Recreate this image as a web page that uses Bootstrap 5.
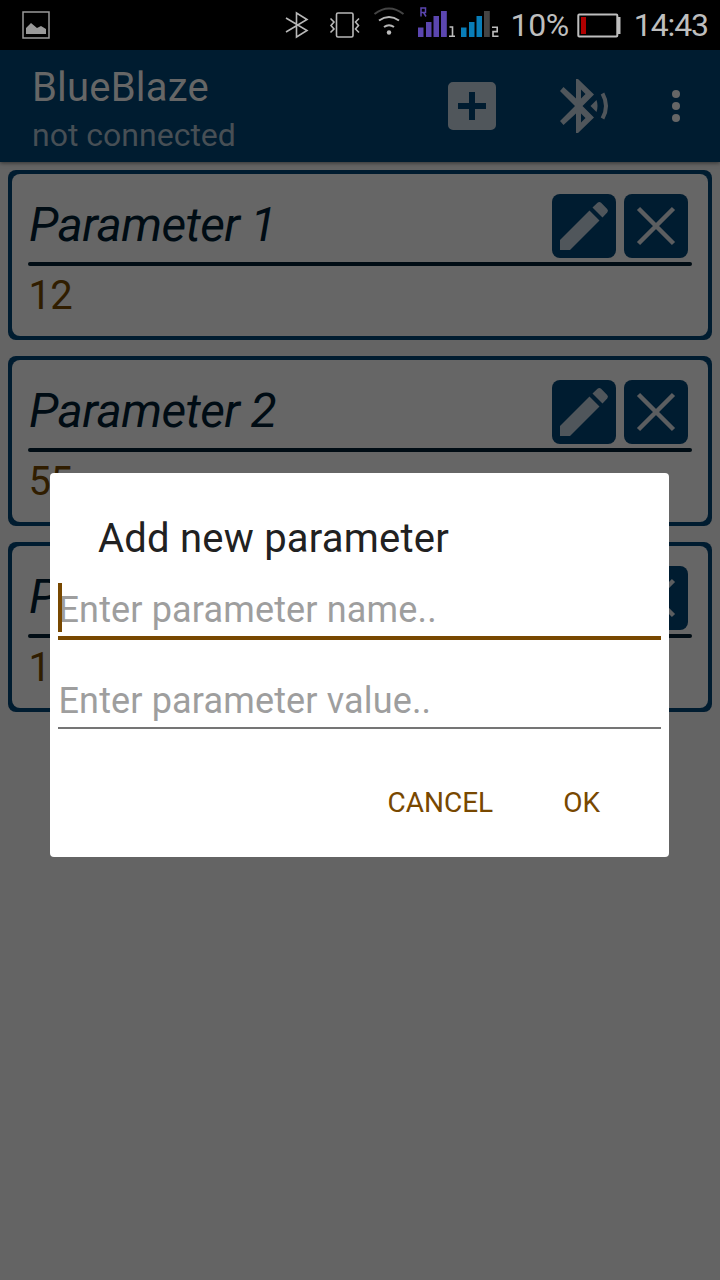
<!DOCTYPE html>
<html lang="en">
<head>
<meta charset="utf-8">
<meta name="viewport" content="width=device-width, initial-scale=1">
<title>BlueBlaze</title>
<link href="https://cdn.jsdelivr.net/npm/bootstrap@5.3.0/dist/css/bootstrap.min.css" rel="stylesheet">
<style>
body{font-family:Roboto,"Noto Sans",sans-serif;background:#646464;height:1280px;overflow:hidden}
svg{display:block;flex:none}
.statusbar{height:50px;background:#000;color:#bebebe;font-size:32px;line-height:38px;padding:6px 12px 6px 22px}
.signals{margin-right:5px}
.battery{margin-left:8px;margin-right:13px}
.status-pct{letter-spacing:-.4px}
.status-time{letter-spacing:-1.1px}
.appbar{height:112px;background:#001c30;padding:14px 24px 0 32px;box-shadow:0 1px 4px rgba(0,0,0,.5)}
.appbar-icons{margin-top:10px;margin-right:16px}
.app-title{font-size:40px;line-height:48px;color:#666;margin-bottom:4px;letter-spacing:.2px}
.app-sub{font-size:32px;line-height:38px;color:#474f55}
.params{padding:8px;gap:16px}
.param{height:170px;background:#001c30;border-radius:8px;padding:4px}
.param-in{background:#666;border-radius:8px;height:162px;padding:20px 16px 0}
.param-name{font-size:48px;line-height:56px;font-style:italic;color:#000c14;margin-top:3px;letter-spacing:-.6px;padding-left:1px}
.param-rule{height:4px;border-radius:2px;background:#000c14;margin-top:4px}
.param-value{font-size:40px;line-height:48px;color:#301d00;margin-top:6px;padding-left:.5px;letter-spacing:-.7px}
.param-btn{width:64px;height:64px;border-radius:8px;background:#001c30;padding:0;border:0}
.dialog-box{top:473px;left:50px;width:619px;height:384px;background:#fff;border:0;border-radius:4px;padding:42px 8px 0}
.dialog-title{font-size:40px;line-height:48px;color:#212121;padding-left:40px;letter-spacing:.22px}
.field{font-size:36px;line-height:42px;color:#9e9e9e;letter-spacing:.15px;padding-left:.5px}
.field-name{height:77px;padding-top:26px;border-bottom:4px solid #784800}
.field-value{height:89px;padding-top:40px;border-bottom:2px solid #757575}
.caret{left:0;top:20px;width:4px;height:49px;background:#784800}
.dialog-actions{margin-top:58px;padding-right:61px;gap:70px}
.dialog-btn{font-size:28px;line-height:32px;color:#784800;border:0;background:none;padding:0}
</style>
</head>
<body>
<header class="statusbar d-flex align-items-center justify-content-between">
  <svg width="28" height="28" viewBox="0 0 28 28"><path d="M1 1h26v26H1z" fill="none" stroke="#999" stroke-width="1.5"/><path d="M4 23v-6l5-5 6 5 4-2 5 3v5z" fill="#999"/></svg>
  <div class="d-flex align-items-center">
    <svg class="signals" width="226" height="50" viewBox="280 0 226 50">
      <g fill="none" stroke="#b8b8b8" stroke-width="1.6">
        <path d="M286 18 307 30.500 296.500 37V13L307 19.500 286 32"/>
        <rect x="336.500" y="13" width="16.500" height="24" rx="1.500"/>
        <path d="M330.500 18.500 334 22 331 25.500 334 29 330.500 32.500M359 18.500 355.500 22 358.500 25.500 355.500 29 359 32.500"/>
        <path d="M374.500 14q14.500-11 29 0" stroke="#444" stroke-width="2"/>
        <path d="M379 20.500q10-7 20 0M384 27q5-3.500 10 0" stroke-width="2"/>
      </g>
      <circle cx="389" cy="32.500" r="2.200" fill="#bebebe"/>
      <path d="M418 27.500h5.500V37H418zM426 22h5.500v15H426zM433.500 16h5.500v21h-5.500zM441 11h5.800v26H441z" fill="#5b46b0"/>
      <path d="M461 27.500h5.500V37H461zM469 22h5.500v15H469zM476.500 16h5.500v21h-5.500z" fill="#087db8"/>
      <path d="M484 11h5.800v26H484z" fill="#444"/>
      <path d="M421 16.500V8h4.500v4.500H421M423.500 12.500l2.500 4" fill="none" stroke="#5b46b0" stroke-width="1.500"/>
      <path d="M449.500 27h3v9M449 36.200h6M492 27.200h5.200v4.400H493v4.600h5.500" fill="none" stroke="#bebebe" stroke-width="1.600"/>
    </svg>
    <span class="status-pct">10%</span>
    <svg class="battery" width="44" height="26" viewBox="0 0 44 26"><rect x="1.300" y="2.500" width="39" height="22" rx="1" fill="none" stroke="#bebebe" stroke-width="2"/><path d="M40 5h3.500v17H40z" fill="#bebebe"/><path d="M4 5h5v17H4z" fill="#b00000"/></svg>
    <span class="status-time">14:43</span>
  </div>
</header>

<nav class="appbar d-flex justify-content-between position-relative">
  <div>
    <div class="app-title">BlueBlaze</div>
    <div class="app-sub">not connected</div>
  </div>
  <svg class="appbar-icons" width="240" height="64" viewBox="440 74 240 64">
    <path fill-rule="evenodd" fill="#50565b" d="M453 82h38a5 5 0 0 1 5 5v38a5 5 0 0 1-5 5h-38a5 5 0 0 1-5-5V87a5 5 0 0 1 5-5zM469 92v11h-11v6h11v11h6v-11h11v-6h-11V92z"/>
    <path fill-rule="evenodd" fill="#50565b" d="M576 79h2l16 15.500-11.500 11.500L594 117.500 578 133h-2V113.500L563.500 125l-3.500-4 15-15-15-15 3.500-4L576 98.500zM581 89.500v9l4.500-4.500zM581 113.500v9l4.500-4.500z"/>
    <path fill="#50565b" d="M590.500 106l6-6q2 6 0 12z"/>
    <path fill="none" stroke="#50565b" stroke-width="4" d="M602.500 93.500q7 12.500 0 25"/>
    <g fill="#666"><circle cx="676" cy="94" r="4"/><circle cx="676" cy="106" r="4"/><circle cx="676" cy="118" r="4"/></g>
  </svg>
</nav>

<main id="params" class="params d-flex flex-column"></main>

<div class="dialog-box position-absolute" role="dialog" aria-label="Add new parameter">
  <div class="dialog-title">Add new parameter</div>
  <div class="field field-name position-relative"><span>Enter parameter name..</span><span class="caret position-absolute"></span></div>
  <div class="field field-value"><span>Enter parameter value..</span></div>
  <div class="dialog-actions d-flex justify-content-end">
    <button class="dialog-btn">CANCEL</button>
    <button class="dialog-btn">OK</button>
  </div>
</div>

<script src="https://cdn.jsdelivr.net/npm/bootstrap@5.3.0/dist/js/bootstrap.bundle.min.js"></script>
<script>
const items = [['Parameter 1', '12'], ['Parameter 2', '55'], ['P', '1']];
document.getElementById('params').innerHTML = items.map(([name, value]) => `
<section class="param"><div class="param-in">
  <div class="d-flex justify-content-between">
    <div class="param-name">${name}</div>
    <div class="d-flex gap-2 pe-1">
      <button class="param-btn" aria-label="Edit"><svg width="64" height="64" viewBox="0 0 64 64"><path fill="#50565b" d="M8 56V46L37.500 16.500 47.500 26.500 18 56zM40.500 13.500 45.500 8.800q1.800-1.600 3.600 0L55.200 15q1.600 1.800 0 3.500L50.500 23.500z"/></svg></button>
      <button class="param-btn" aria-label="Delete"><svg width="64" height="64" viewBox="0 0 64 64"><path fill="none" stroke="#5c5e60" stroke-width="4.500" d="M14.500 14.500 49.500 49.500M49.500 14.500 14.500 49.500"/></svg></button>
    </div>
  </div>
  <div class="param-rule"></div>
  <div class="param-value">${value}</div>
</div></section>`).join('');
</script>
</body>
</html>
